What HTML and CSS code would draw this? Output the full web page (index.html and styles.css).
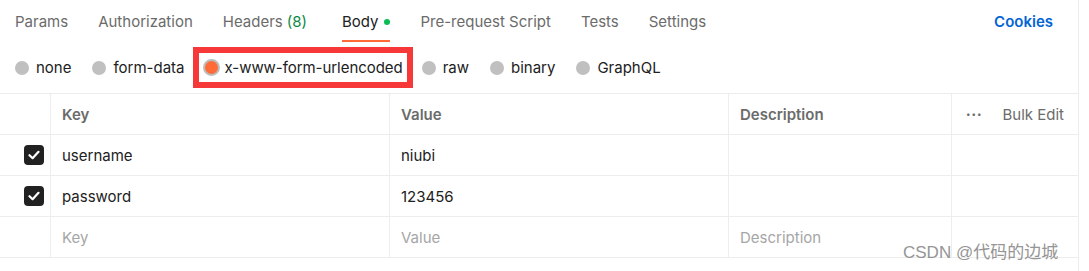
FILE: index.html
```html
<!DOCTYPE html>
<html lang="en">
<head>
    <meta charset="UTF-8">
    <title>Body - x-www-form-urlencoded</title>
    <link rel="stylesheet" href="styles.css">
</head>
<body>
    <div class="panel">
        <div class="tabs">
            <span class="tab">Params</span>
            <span class="tab">Authorization</span>
            <span class="tab headers">Headers <span class="count">(8)</span></span>
            <span class="tab active">Body <span class="dot"></span></span>
            <span class="tab">Pre-request Script</span>
            <span class="tab">Tests</span>
            <span class="tab">Settings</span>
            <span class="cookies">Cookies</span>
        </div>

        <div class="body-types">
            <label class="radio"><span class="circle"></span>none</label>
            <label class="radio"><span class="circle"></span>form-data</label>
            <label class="radio selected"><span class="circle"></span>x-www-form-urlencoded</label>
            <label class="radio"><span class="circle"></span>raw</label>
            <label class="radio"><span class="circle"></span>binary</label>
            <label class="radio"><span class="circle"></span>GraphQL</label>
        </div>

        <div class="table">
            <div class="row head">
                <div class="cell"></div>
                <div class="cell">Key</div>
                <div class="cell">Value</div>
                <div class="cell">Description</div>
                <div class="cell bulk"><span class="more">•••</span>Bulk Edit</div>
            </div>
            <div class="row">
                <div class="cell check"><span class="box"><svg width="12" height="10" viewBox="0 0 12 10"><path d="M1.5 5.2 L4.6 8.2 L10.5 1.8" fill="none" stroke="#fff" stroke-width="2.2" stroke-linecap="round" stroke-linejoin="round"/></svg></span></div>
                <div class="cell">username</div>
                <div class="cell">niubi</div>
                <div class="cell"></div>
                <div class="cell"></div>
            </div>
            <div class="row">
                <div class="cell check"><span class="box"><svg width="12" height="10" viewBox="0 0 12 10"><path d="M1.5 5.2 L4.6 8.2 L10.5 1.8" fill="none" stroke="#fff" stroke-width="2.2" stroke-linecap="round" stroke-linejoin="round"/></svg></span></div>
                <div class="cell">password</div>
                <div class="cell">123456</div>
                <div class="cell"></div>
                <div class="cell"></div>
            </div>
            <div class="row placeholder">
                <div class="cell"></div>
                <div class="cell">Key</div>
                <div class="cell">Value</div>
                <div class="cell">Description</div>
                <div class="cell"></div>
            </div>
        </div>
    </div>

    <div class="watermark">CSDN @代码的边城</div>
</body>
</html>
```

FILE: styles.css
```css
body {
    margin: 0;
    font-family: Inter, "Noto Sans CJK SC", sans-serif;
    font-size: 15px;
    color: #212121;
    background: #fff;
}
.panel {
    width: 1078px;
    height: 271px;
    border-right: 1px solid #ededed;
}
.tabs {
    display: flex;
    align-items: flex-start;
    height: 42px;
    padding-left: 15px;
    box-sizing: border-box;
}
.tab {
    display: flex;
    align-items: center;
    height: 42px;
    margin-right: 30px;
    padding-top: 3px;
    box-sizing: border-box;
    color: #6b6b6b;
    border-bottom: 2px solid transparent;
}
.tab.headers {
    margin-right: 35px;
}
.tab .count {
    color: #0a8a45;
    margin-left: 4px;
}
.tab.active {
    color: #212121;
    border-bottom-color: #ff6c37;
}
.dot {
    width: 6px;
    height: 6px;
    border-radius: 50%;
    background: #0cbb52;
    margin-left: 6px;
}
.cookies {
    margin-left: auto;
    margin-right: 25px;
    height: 42px;
    display: flex;
    align-items: center;
    box-sizing: border-box;
    color: #0265d2;
    font-weight: 600;
}
.body-types {
    display: flex;
    align-items: center;
    height: 51px;
    padding-left: 15px;
}
.radio {
    display: flex;
    align-items: center;
    margin-right: 21px;
}
.circle {
    width: 14px;
    height: 14px;
    border-radius: 50%;
    background: #c0c0c0;
    margin-right: 7px;
    box-sizing: border-box;
}
.radio.selected {
    border: 6px solid #f73838;
    padding: 0 4px 0 4px;
    height: 41px;
    box-sizing: border-box;
    margin-left: -13px;
    margin-right: 9px;
    letter-spacing: -0.05px;
}
.radio.selected .circle {
    background: #ff6c37;
    border: 2px solid #bdbdbd;
    width: 17px;
    height: 17px;
    margin-right: 5px;
}
.table {
    border-top: 1px solid #ededed;
}
.row {
    display: grid;
    grid-template-columns: 50px 339px 339px 223px 1fr;
    height: 41px;
    box-sizing: border-box;
    border-bottom: 1px solid #ededed;
}
.cell {
    display: flex;
    align-items: center;
    padding-left: 11px;
    border-left: 1px solid #ededed;
}
.row .cell:first-child {
    border-left: none;
    padding-left: 0;
}
.head .cell {
    color: #6b6b6b;
    font-weight: 600;
}
.head .cell.bulk {
    font-weight: 400;
    padding-left: 14px;
}
.more {
    font-size: 8px;
    letter-spacing: 1px;
    margin-right: 20px;
    color: #6b6b6b;
}
.row .cell.check {
    padding-left: 24px;
}
.box {
    width: 20px;
    height: 20px;
    border-radius: 4px;
    background: #212121;
    display: flex;
    align-items: center;
    justify-content: center;
}
.placeholder .cell {
    color: #a6a6a6;
}
.watermark {
    position: absolute;
    left: 903px;
    top: 238px;
    font-size: 17px;
    color: #8a8a8a;
    font-family: "Liberation Sans", "Noto Sans CJK SC", sans-serif;
    opacity: 0.9;
}
```
